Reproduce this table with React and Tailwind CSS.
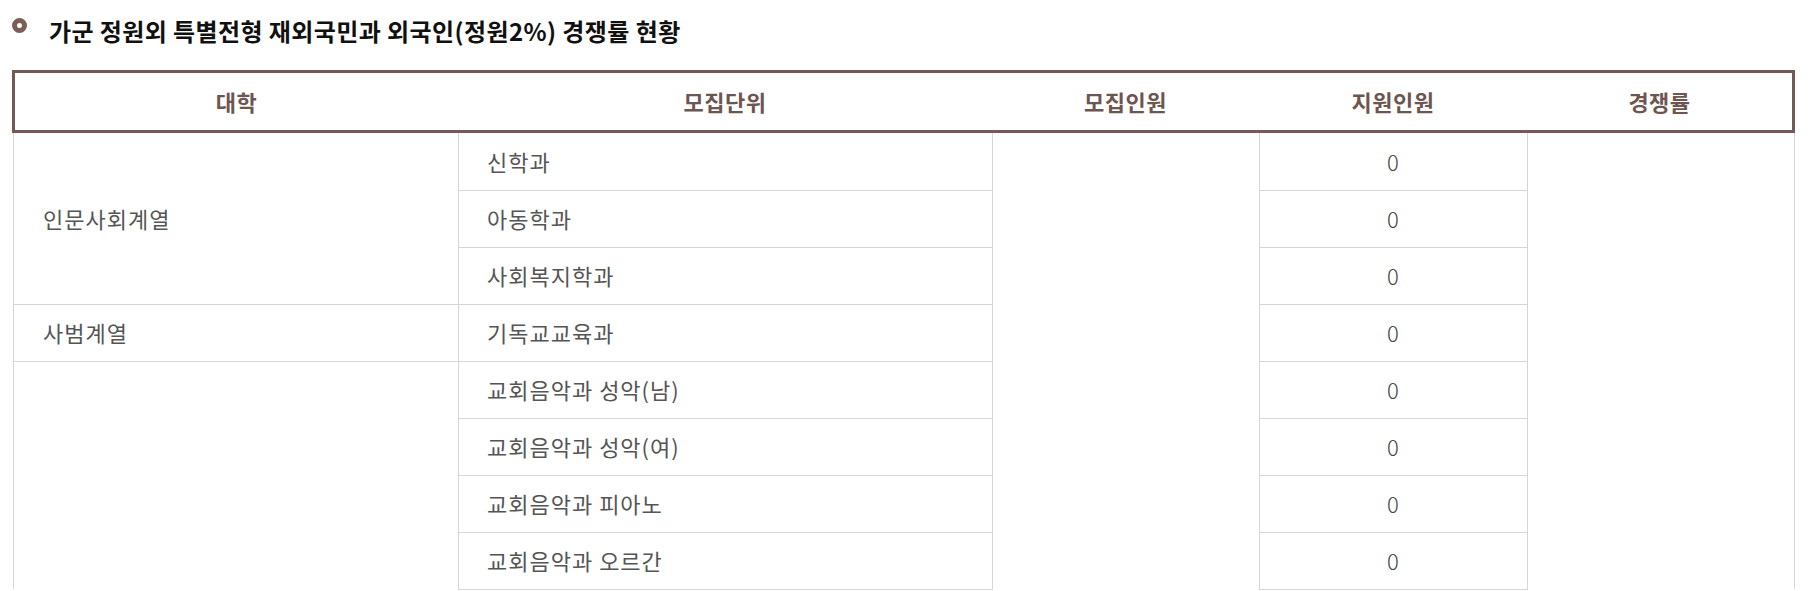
import React from "react";

const rows = [
  { group: "인문사회계열", span: 3, dept: "신학과" },
  { dept: "아동학과" },
  { dept: "사회복지학과" },
  { group: "사범계열", span: 1, dept: "기독교교육과" },
  { group: "", span: 4, open: true, dept: "교회음악과 성악(남)" },
  { dept: "교회음악과 성악(여)" },
  { dept: "교회음악과 피아노" },
  { dept: "교회음악과 오르간" },
];

const headers = ["대학", "모집단위", "모집인원", "지원인원", "경쟁률"];

export default function App() {
  return (
    <div className="min-h-[591px] bg-white pl-[12px] pt-[14px] font-['Noto_Sans_CJK_KR','Noto_Sans',sans-serif]">
      <div className="flex items-start">
        <span className="mt-[4px] block h-[15px] w-[15px] shrink-0 rounded-full border-[5px] border-[#7b5e56]" />
        <h2 className="ml-[22px] text-[24px] font-bold leading-[34px] tracking-[0.4px] text-[#111]">
          가군 정원외 특별전형 재외국민과 외국인(정원2%) 경쟁률 현황
        </h2>
      </div>

      <div className="mt-[22px] w-[1783px]">
        <div className="grid h-[63px] grid-cols-[443px_534px_267px_268px_265px] items-center border-[3px] border-[#725b56] text-[22px] font-semibold tracking-[0.5px] text-[#6d5550]">
          {headers.map((h) => (
            <div key={h} className="text-center">
              {h}
            </div>
          ))}
        </div>

        <table className="ml-px w-[1781px] table-fixed border-collapse text-[22px] tracking-[1px] text-[#555]">
          <colgroup>
            <col className="w-[445px]" />
            <col className="w-[534px]" />
            <col className="w-[267px]" />
            <col className="w-[268px]" />
            <col className="w-[267px]" />
          </colgroup>
          <tbody>
            {rows.map((r, i) => (
              <tr key={i} className="h-[57px]">
                {r.span !== undefined && (
                  <td
                    rowSpan={r.span}
                    className={`border-x border-[#d6d6d6] pl-[29px] align-middle ${
                      i === 0 ? "border-t-0" : "border-t"
                    } ${r.open ? "border-b-0" : "border-b"}`}
                  >
                    {r.group}
                  </td>
                )}
                <td
                  className={`border-x border-b border-[#d6d6d6] pl-[28px] align-middle ${
                    i === 0 ? "border-t-0" : "border-t"
                  }`}
                >
                  {r.dept}
                </td>
                {i === 0 && (
                  <td rowSpan={8} className="border-x border-b-0 border-t-0 border-[#d6d6d6]" />
                )}
                <td
                  className={`border-x border-b border-[#d6d6d6] text-center align-middle font-light text-[#444] ${
                    i === 0 ? "border-t-0" : "border-t"
                  }`}
                >
                  0
                </td>
                {i === 0 && (
                  <td rowSpan={8} className="border-x border-b-0 border-t-0 border-[#d6d6d6]" />
                )}
              </tr>
            ))}
          </tbody>
        </table>
      </div>
    </div>
  );
}
